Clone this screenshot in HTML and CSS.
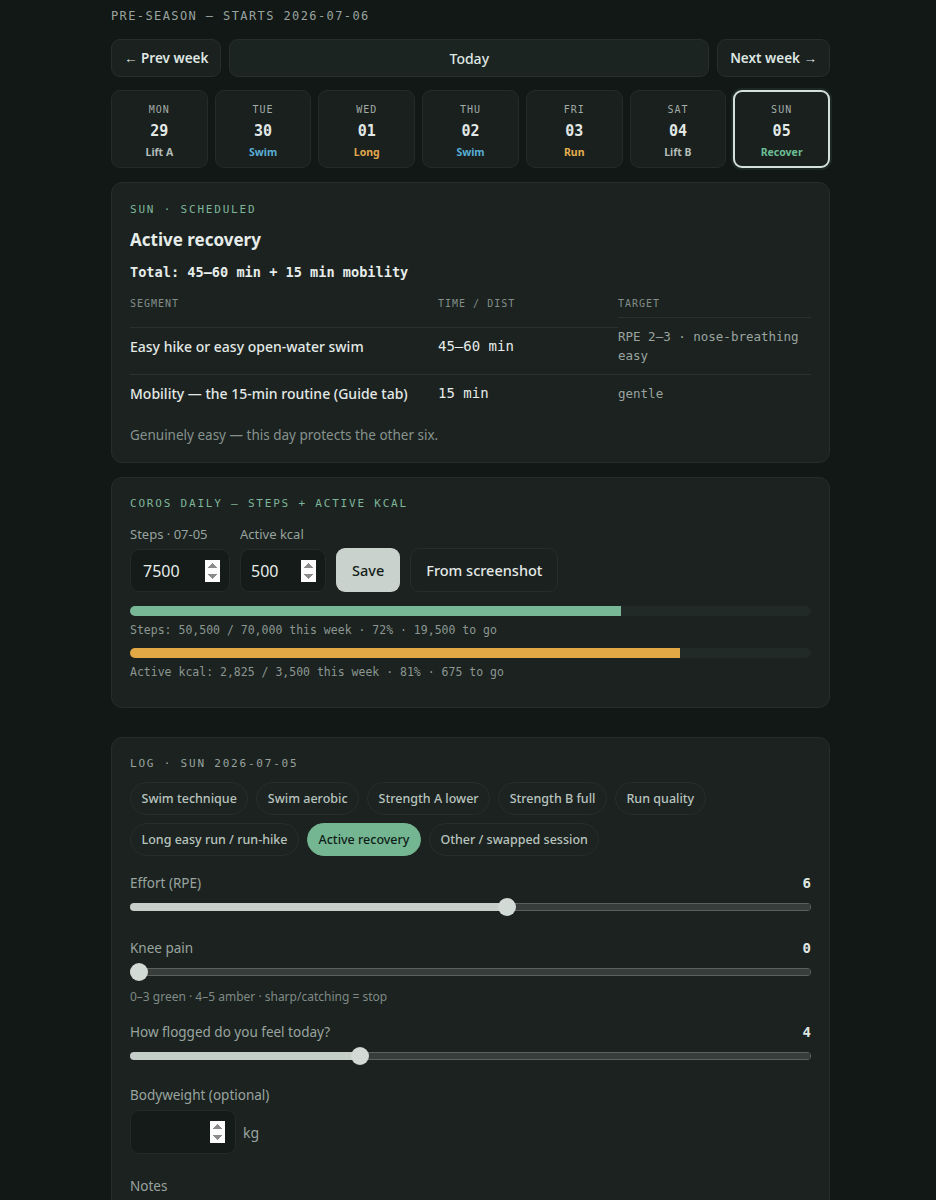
FILE: index.html
```html
<!DOCTYPE html>
<html lang="en">
<head>
<meta charset="utf-8">
<title>Pre-season plan</title>
<link rel="stylesheet" href="styles.css">
</head>
<body>
<div class="page">
  <div class="eyebrow">PRE-SEASON — STARTS 2026-07-06</div>

  <div class="nav">
    <button class="nav-btn">← Prev week</button>
    <button class="nav-btn today">Today</button>
    <button class="nav-btn">Next week →</button>
  </div>

  <div class="days">
    <div class="day"><div class="dname">MON</div><div class="dnum">29</div><div class="dtag lift">Lift A</div></div>
    <div class="day"><div class="dname">TUE</div><div class="dnum">30</div><div class="dtag swim">Swim</div></div>
    <div class="day"><div class="dname">WED</div><div class="dnum">01</div><div class="dtag long">Long</div></div>
    <div class="day"><div class="dname">THU</div><div class="dnum">02</div><div class="dtag swim">Swim</div></div>
    <div class="day"><div class="dname">FRI</div><div class="dnum">03</div><div class="dtag run">Run</div></div>
    <div class="day"><div class="dname">SAT</div><div class="dnum">04</div><div class="dtag lift">Lift B</div></div>
    <div class="day selected"><div class="dname">SUN</div><div class="dnum">05</div><div class="dtag rec">Recover</div></div>
  </div>

  <section class="card sched">
    <div class="kicker green">SUN · SCHEDULED</div>
    <h2 class="title">Active recovery</h2>
    <div class="total">Total: 45–60 min + 15 min mobility</div>
    <div class="seg">
      <div class="th">SEGMENT</div>
      <div class="th">TIME / DIST</div>
      <div class="th">TARGET</div>
      <div class="td name">Easy hike or easy open-water swim</div>
      <div class="td time">45–60 min</div>
      <div class="td target">RPE 2–3 · nose-breathing easy</div>
      <div class="td name">Mobility — the 15-min routine (Guide tab)</div>
      <div class="td time">15 min</div>
      <div class="td target">gentle</div>
    </div>
    <p class="note">Genuinely easy — this day protects the other six.</p>
  </section>

  <section class="card coros">
    <div class="kicker green">COROS DAILY — STEPS + ACTIVE KCAL</div>
    <div class="coros-row">
      <label class="field">
        <span class="flabel">Steps · 07-05</span>
        <input class="num steps" type="number" value="7500">
      </label>
      <label class="field">
        <span class="flabel">Active kcal</span>
        <input class="num kcal" type="number" value="500">
      </label>
      <button class="btn primary">Save</button>
      <button class="btn ghost">From screenshot</button>
    </div>
    <div class="bar"><div class="fill green-fill" style="width:72.1%"></div></div>
    <div class="bar-text">Steps: 50,500 / 70,000 this week · 72% · 19,500 to go</div>
    <div class="bar second"><div class="fill amber-fill" style="width:80.7%"></div></div>
    <div class="bar-text">Active kcal: 2,825 / 3,500 this week · 81% · 675 to go</div>
  </section>

  <section class="card log">
    <div class="kicker">LOG · SUN 2026-07-05</div>
    <div class="chips">
      <span class="chip">Swim technique</span>
      <span class="chip">Swim aerobic</span>
      <span class="chip">Strength A lower</span>
      <span class="chip">Strength B full</span>
      <span class="chip">Run quality</span>
      <span class="chip">Long easy run / run-hike</span>
      <span class="chip active">Active recovery</span>
      <span class="chip">Other / swapped session</span>
    </div>

    <div class="slider-field first">
      <div class="srow"><span class="slabel">Effort (RPE)</span><span class="sval">6</span></div>
      <input class="range" type="range" min="1" max="10" value="6" style="--p:55.6%">
    </div>

    <div class="slider-field">
      <div class="srow"><span class="slabel">Knee pain</span><span class="sval">0</span></div>
      <input class="range" type="range" min="0" max="10" value="0" style="--p:0%">
      <div class="hint">0–3 green · 4–5 amber · sharp/catching = stop</div>
    </div>

    <div class="slider-field after-hint">
      <div class="srow"><span class="slabel">How flogged do you feel today?</span><span class="sval">4</span></div>
      <input class="range" type="range" min="1" max="10" value="4" style="--p:33.3%">
    </div>

    <div class="bw">
      <div class="slabel">Bodyweight (optional)</div>
      <div class="bw-row">
        <input class="num weight" type="number">
        <span class="unit">kg</span>
      </div>
    </div>

    <div class="notes">
      <div class="slabel">Notes</div>
      <textarea class="notes-box" rows="4"></textarea>
    </div>
  </section>
</div>
</body>
</html>
```

FILE: styles.css
```css
* { box-sizing: border-box; }

html, body {
  margin: 0;
  background: #111816;
}

body {
  font-family: "Noto Sans", "Open Sans", sans-serif;
  color: #e3e9e6;
}

.page {
  width: 719px;
  margin: 0 auto;
  padding: 8px 0 40px 5px;
  box-sizing: content-box;
}

.eyebrow {
  font-family: "DejaVu Sans Mono", monospace;
  font-size: 12px;
  line-height: 16px;
  letter-spacing: 1.4px;
  color: #9aa39f;
}

/* nav */
.nav {
  display: flex;
  gap: 8px;
  margin-top: 15px;
}

.nav-btn {
  height: 38px;
  padding: 0 12px;
  border-radius: 9px;
  border: 1px solid #262f2c;
  background: #1a211f;
  color: #dfe6e2;
  font-family: inherit;
  font-size: 13.5px;
  font-weight: 600;
}

.nav-btn.today {
  flex: 1;
  background: #1c2422;
  font-weight: 500;
  font-size: 14px;
}

/* days */
.days {
  display: grid;
  grid-template-columns: repeat(7, 1fr);
  gap: 7px;
  margin-top: 13px;
}

.day {
  height: 78px;
  padding: 12px 4px 0;
  border-radius: 9px;
  border: 1px solid #232c29;
  background: #19201e;
  text-align: center;
}

.day.selected {
  border: 2px solid #d5e0da;
  padding-top: 11px;
  box-shadow: 0 0 0 2px #1d2824;
}

.dname {
  font-family: "DejaVu Sans Mono", monospace;
  font-size: 10px;
  line-height: 14px;
  letter-spacing: 1px;
  color: #a2aba7;
}

.dnum {
  margin-top: 4px;
  font-family: "DejaVu Sans Mono", monospace;
  font-size: 15px;
  font-weight: 700;
  line-height: 20px;
  color: #e2e8e5;
}

.dtag {
  margin-top: 4px;
  font-size: 10.5px;
  font-weight: 700;
  line-height: 14px;
}

.dtag.lift { color: #b3bdb8; }
.dtag.swim { color: #5aaed6; }
.dtag.long { color: #e0a84c; }
.dtag.run  { color: #e2ae4e; }
.dtag.rec  { color: #6cbd94; }

/* cards */
.card {
  margin-top: 14px;
  padding: 18px;
  border-radius: 11px;
  border: 1px solid #252e2b;
  background: #1b2220;
}

.kicker {
  font-family: "DejaVu Sans Mono", monospace;
  font-size: 11px;
  line-height: 16px;
  letter-spacing: 1.8px;
  color: #99a29e;
}

.kicker.green { color: #7fb59a; }

.sched { padding-top: 19px; padding-bottom: 17px; }

.title {
  margin: 10px 0 0;
  font-size: 17px;
  font-weight: 700;
  line-height: 24px;
  color: #e6ece9;
}

.total {
  margin-top: 10px;
  font-family: "DejaVu Sans Mono", monospace;
  font-size: 13.6px;
  font-weight: 700;
  line-height: 20px;
  color: #e6ece9;
}

.seg {
  display: grid;
  grid-template-columns: 308px 180px 1fr;
  align-items: center;
  margin-top: 5px;
}

.th {
  padding: 10px 0 6px;
  font-family: "DejaVu Sans Mono", monospace;
  font-size: 10px;
  line-height: 14px;
  letter-spacing: 1px;
  color: #838e89;
}

.td {
  padding: 9px 10px 9px 0;
  border-top: 1px solid #29322f;
  line-height: 19px;
}

.td.name {
  font-size: 14px;
  font-weight: 500;
  color: #e3e9e6;
}

.td.time {
  font-family: "DejaVu Sans Mono", monospace;
  font-size: 14px;
  color: #e6ece9;
}

.td.target {
  font-family: "DejaVu Sans Mono", monospace;
  font-size: 12.5px;
  color: #9aa49f;
}

.note {
  margin: 13px 0 0;
  font-size: 13.5px;
  line-height: 20px;
  color: #87928d;
}

/* coros */
.coros { padding-bottom: 27px; }

.coros-row {
  display: flex;
  align-items: flex-end;
  gap: 10px;
  margin-top: 14px;
}

.field {
  display: flex;
  flex-direction: column;
  gap: 7px;
}

.flabel {
  font-size: 13px;
  line-height: 16px;
  color: #98a29e;
}

.num {
  height: 43px;
  padding: 8px 9px 8px 12px;
  border-radius: 9px;
  border: 1px solid #222b28;
  background: #141b19;
  color: #e6ece9;
  font-family: inherit;
  font-size: 16px;
  outline: none;
}

.num::-webkit-inner-spin-button,
.num::-webkit-outer-spin-button {
  opacity: 1;
}

.num.steps { width: 100px; }
.num.kcal { width: 86px; padding-left: 10px; }

.btn {
  height: 44px;
  padding: 0 15px;
  border-radius: 9px;
  font-family: inherit;
  font-size: 14.5px;
  font-weight: 500;
}

.btn.primary {
  border: none;
  background: #c9d2cd;
  color: #141d19;
  padding: 0 16px;
}

.btn.ghost {
  border: 1px solid #252e2b;
  background: #1a211f;
  color: #e3e9e6;
}

.bar {
  height: 10px;
  margin-top: 14px;
  border-radius: 5px;
  background: #222a28;
  overflow: hidden;
}

.bar.second { margin-top: 10px; }

.fill { height: 100%; }
.green-fill { background: #78b896; }
.amber-fill { background: #e2a845; }

.bar-text {
  margin-top: 6px;
  font-family: "DejaVu Sans Mono", monospace;
  font-size: 11.5px;
  line-height: 16px;
  color: #8c9792;
}

/* log */
.log { margin-top: 29px; }

.chips {
  display: flex;
  flex-wrap: wrap;
  gap: 8px;
  margin-top: 10px;
}

.chip {
  display: inline-flex;
  align-items: center;
  height: 33px;
  padding: 0 10.5px;
  border-radius: 999px;
  border: 1px solid #262f2c;
  background: #1c2321;
  color: #b9c3be;
  font-size: 12.5px;
  font-weight: 500;
}

.chip.active {
  background: #74b592;
  border-color: #74b592;
  color: #0f1d17;
}

.slider-field { margin-top: 22px; }
.slider-field.first { margin-top: 17px; }
.slider-field.after-hint { margin-top: 17px; }

.srow {
  display: flex;
  justify-content: space-between;
  align-items: baseline;
}

.slabel {
  font-size: 13.5px;
  line-height: 20px;
  color: #9aa49f;
}

.sval {
  font-family: "DejaVu Sans Mono", monospace;
  font-size: 14px;
  font-weight: 700;
  color: #dfe6e2;
}

.range {
  -webkit-appearance: none;
  appearance: none;
  display: block;
  width: 100%;
  height: 18px;
  margin: 5px 0 11px;
  background: transparent;
}

.range::-webkit-slider-runnable-track {
  height: 8px;
  border-radius: 4px;
  background:
    linear-gradient(to right, #c6cec9 var(--p), transparent var(--p)),
    linear-gradient(#383d3b, #383d3b) center / calc(100% - 2px) calc(100% - 2px) no-repeat,
    #5b615e;
}

.range::-webkit-slider-thumb {
  -webkit-appearance: none;
  appearance: none;
  width: 18px;
  height: 18px;
  margin-top: -5px;
  border-radius: 50%;
  border: none;
  background: #d2dad6;
}

.hint {
  margin-top: -3px;
  font-size: 12px;
  line-height: 16px;
  color: #7f8a85;
}

.bw { margin-top: 20px; }

.bw-row {
  display: flex;
  align-items: center;
  gap: 7px;
  margin-top: 5px;
}

.num.weight {
  width: 106px;
  height: 44px;
  padding-right: 10px;
}

.unit {
  font-size: 14px;
  color: #9aa49f;
}

.notes { margin-top: 22px; }

.notes-box {
  display: block;
  width: 100%;
  margin-top: 6px;
  height: 90px;
  border-radius: 9px;
  border: 1px solid #222b28;
  background: #141b19;
  resize: none;
}
```
